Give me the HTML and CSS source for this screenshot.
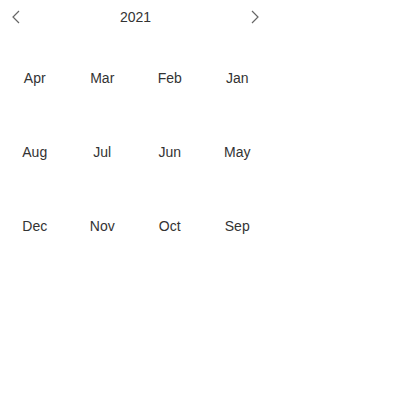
FILE: index.html
```html
<!DOCTYPE html>
<html>
<head>
<meta charset="utf-8">
<link rel="stylesheet" href="styles.css">
</head>
<body>
<div class="picker">
  <div class="header">
    <button class="nav" aria-label="previous">
      <svg width="8" height="14" viewBox="0 0 8 14"><path d="M7 1 L1 7 L7 13" fill="none" stroke="#666" stroke-width="1.2"/></svg>
    </button>
    <div class="year">2021</div>
    <button class="nav" aria-label="next">
      <svg width="8" height="14" viewBox="0 0 8 14"><path d="M1 1 L7 7 L1 13" fill="none" stroke="#666" stroke-width="1.2"/></svg>
    </button>
  </div>
  <div class="months">
    <div class="m">Apr</div><div class="m">Mar</div><div class="m">Feb</div><div class="m">Jan</div>
    <div class="m">Aug</div><div class="m">Jul</div><div class="m">Jun</div><div class="m">May</div>
    <div class="m">Dec</div><div class="m">Nov</div><div class="m">Oct</div><div class="m">Sep</div>
  </div>
</div>
</body>
</html>
```
FILE: styles.css
```css
html, body {
  margin: 0;
  padding: 0;
  background: #fff;
}
body {
  font-family: "Liberation Sans", Arial, sans-serif;
  font-size: 14px;
  color: #333;
}
.picker {
  width: 271px;
}
.header {
  height: 34px;
  display: flex;
  align-items: center;
  justify-content: space-between;
  padding: 0 12px;
}
.nav {
  border: none;
  background: none;
  padding: 0;
  width: 8px;
  height: 14px;
  display: flex;
  cursor: pointer;
}
.year {
  line-height: 34px;
}
.months {
  display: grid;
  grid-template-columns: repeat(4, 1fr);
  grid-auto-rows: 74px;
  padding-top: 7px;
  padding-left: 1px;
}
.m {
  display: flex;
  align-items: center;
  justify-content: center;
}
```
